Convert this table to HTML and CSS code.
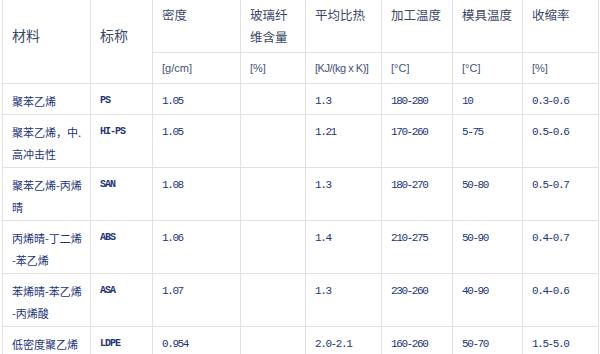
FILE: index.html
```html
<!DOCTYPE html>
<html>

<head>
    <title>塑料材料特性</title>
    <meta charset="utf-8">
    <meta name='viewport' content='width=device-width'>
    <link rel="stylesheet" href="styles.css">
</head>

<body>
    <table class="props">
        <colgroup>
            <col class="c-name">
            <col class="c-abbr">
            <col class="c-dens">
            <col class="c-glass">
            <col class="c-heat">
            <col class="c-proc">
            <col class="c-mold">
            <col class="c-shrink">
        </colgroup>
        <thead>
            <tr>
                <th rowspan="2" class="big">材料</th>
                <th rowspan="2" class="big">标称</th>
                <th>密度</th>
                <th>玻璃纤<br>维含量</th>
                <th>平均比热</th>
                <th>加工温度</th>
                <th>模具温度</th>
                <th>收缩率</th>
            </tr>
            <tr class="units">
                <th>[g/cm]</th>
                <th>[%]</th>
                <th class="tight">[KJ/(kg x K)]</th>
                <th>[°C]</th>
                <th>[°C]</th>
                <th>[%]</th>
            </tr>
        </thead>
        <tbody>
            <tr>
                <td class="cn">聚苯乙烯</td>
                <td class="ab">PS</td>
                <td class="num">1.05</td>
                <td></td>
                <td class="num">1.3</td>
                <td class="num">180-280</td>
                <td class="num">10</td>
                <td class="num">0.3-0.6</td>
            </tr>
            <tr>
                <td class="cn">聚苯乙烯，中.<br>高冲击性</td>
                <td class="ab">HI-PS</td>
                <td class="num">1.05</td>
                <td></td>
                <td class="num">1.21</td>
                <td class="num">170-260</td>
                <td class="num">5-75</td>
                <td class="num">0.5-0.6</td>
            </tr>
            <tr>
                <td class="cn">聚苯乙烯-丙烯<br>晴</td>
                <td class="ab">SAN</td>
                <td class="num">1.08</td>
                <td></td>
                <td class="num">1.3</td>
                <td class="num">180-270</td>
                <td class="num">50-80</td>
                <td class="num">0.5-0.7</td>
            </tr>
            <tr>
                <td class="cn">丙烯晴-丁二烯<br>-苯乙烯</td>
                <td class="ab">ABS</td>
                <td class="num">1.06</td>
                <td></td>
                <td class="num">1.4</td>
                <td class="num">210-275</td>
                <td class="num">50-90</td>
                <td class="num">0.4-0.7</td>
            </tr>
            <tr>
                <td class="cn">苯烯晴-苯乙烯<br>-丙烯酸</td>
                <td class="ab">ASA</td>
                <td class="num">1.07</td>
                <td></td>
                <td class="num">1.3</td>
                <td class="num">230-260</td>
                <td class="num">40-90</td>
                <td class="num">0.4-0.6</td>
            </tr>
            <tr>
                <td class="cn">低密度聚乙烯</td>
                <td class="ab">LDPE</td>
                <td class="num">0.954</td>
                <td></td>
                <td class="num">2.0-2.1</td>
                <td class="num">160-260</td>
                <td class="num">50-70</td>
                <td class="num">1.5-5.0</td>
            </tr>
        </tbody>
    </table>
</body>

</html>
```

FILE: styles.css
```css
body {
    margin: 0;
    background: #fff;
    font-family: "Noto Sans CJK SC", "Liberation Sans", sans-serif;
}

.props {
    border-collapse: collapse;
    table-layout: fixed;
    width: 597px;
    margin: -1px 0 0 2px;
}

.c-name { width: 88px; }
.c-abbr { width: 62px; }
.c-dens { width: 88px; }
.c-glass { width: 65px; }
.c-heat { width: 76px; }
.c-proc { width: 71px; }
.c-mold { width: 70px; }
.c-shrink { width: 76px; }

.props th,
.props td {
    border: 1px solid #e2e2e2;
    text-align: left;
    vertical-align: top;
    padding: 4px 8px 4px 9px;
    line-height: 22px;
    white-space: nowrap;
}

.props th {
    font-weight: normal;
    font-size: 12.5px;
    color: #3b4866;
}

.props th.big {
    font-size: 14px;
    padding-top: 24px;
}

.units th {
    vertical-align: middle;
    font-family: "Liberation Sans", Arial, sans-serif;
    font-size: 11px;
    color: #45527a;
}

.units th.tight {
    letter-spacing: -0.5px;
}

.props td {
    padding: 6px 8px 2px 9px;
    color: #22347a;
}

.props td.cn {
    font-size: 11px;
}

.props td.num,
.props td.ab {
    font-family: "Liberation Mono", "DejaVu Sans Mono", monospace;
    font-size: 11px;
    letter-spacing: -1.4px;
}

.props td.ab {
    font-weight: bold;
    font-size: 10px;
    letter-spacing: -1px;
}
```
